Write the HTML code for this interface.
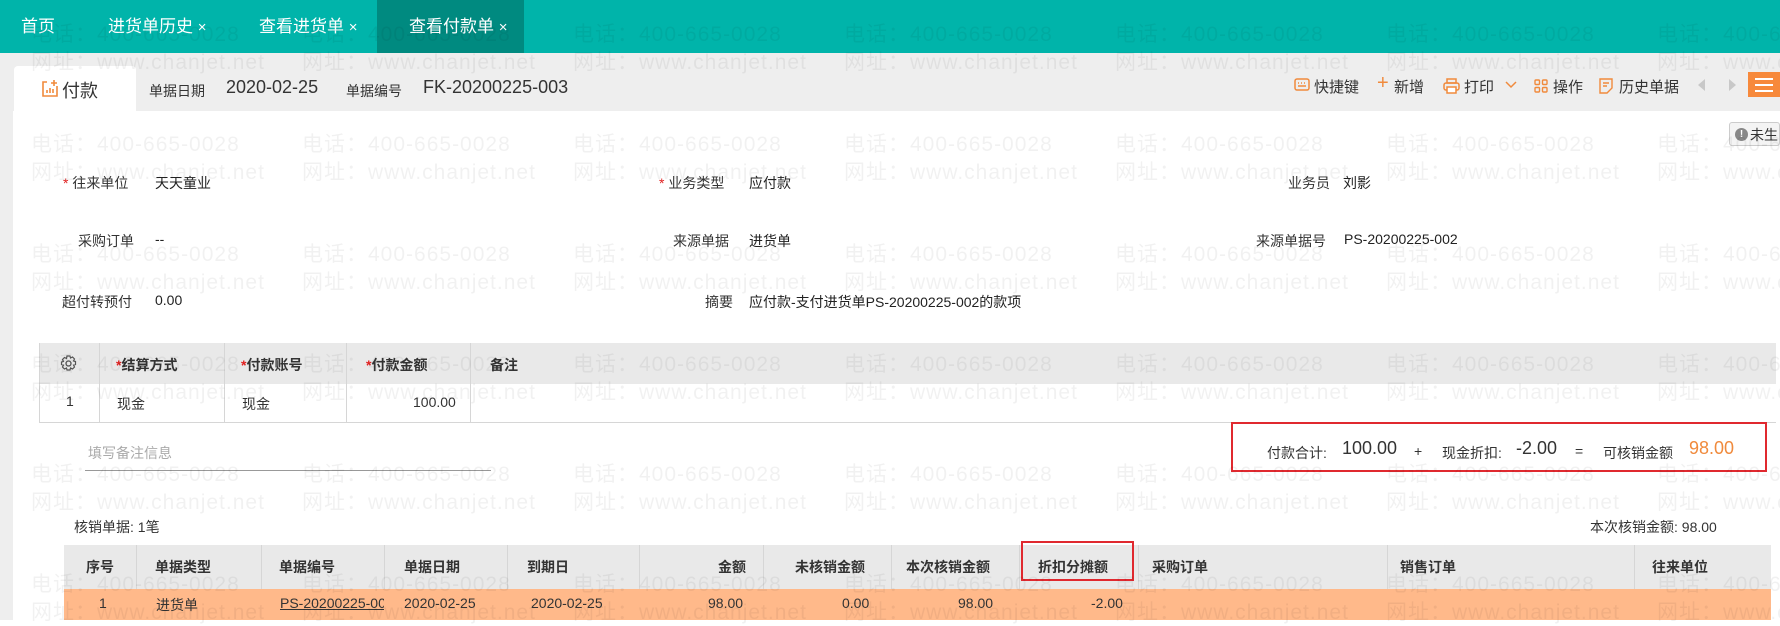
<!DOCTYPE html>
<html><head><meta charset="utf-8">
<style>
*{margin:0;padding:0;box-sizing:border-box}
body{width:1780px;height:620px;overflow:hidden;background:#fff;font-family:"Liberation Sans","Noto Sans CJK SC",sans-serif;color:#333;position:relative}
.a{position:absolute;white-space:nowrap}
.top{position:absolute;left:0;top:0;width:1780px;height:53px;background:#00b4aa}
.tab{position:absolute;top:0;height:53px;line-height:53px;color:#fff;font-size:17px}
.band{position:absolute;left:0;top:53px;width:1780px;height:58px;background:#eeeeee}
.lbl{font-size:14px;color:#333}
.val{font-size:14px;color:#222}
.req{color:#e02020}
.t1h{position:absolute;top:343px;height:41px;background:#e9e9e9}
.vl{position:absolute;width:1px;background:#d6d6d6}
.wm{position:absolute;font-size:21px;color:rgba(0,0,0,0.055);white-space:nowrap;letter-spacing:1px}
.o{color:#f08a3c}
.th{font-size:14px;font-weight:bold;color:#333}
.tb{font-size:14px;color:#333}
</style></head><body>
<div class="top"></div>
<div class="a" style="left:377px;top:0;width:147px;height:53px;background:#008a80"></div>
<div class="tab" style="left:21px">首页</div>
<div class="tab" style="left:108px">进货单历史 <span style="font-size:15px">×</span></div>
<div class="tab" style="left:259px">查看进货单 <span style="font-size:15px">×</span></div>
<div class="tab" style="left:409px">查看付款单 <span style="font-size:15px">×</span></div>

<div class="band"></div>
<div class="a" style="left:0;top:111px;width:13px;height:509px;background:#eeeeee"></div>
<div class="a" style="left:14px;top:66px;width:122px;height:45px;background:#fff;border-radius:4px 4px 0 0"></div>
<svg class="a" style="left:40px;top:79px" width="20" height="20" viewBox="0 0 20 20"><path d="M7 3H3v14h14V7" fill="none" stroke="#f08a3c" stroke-width="1.6"/><path d="M14 1v6M11 4h6" stroke="#f08a3c" stroke-width="1.6"/><path d="M7 14v-3M10 14V9M13 14v-4" stroke="#f08a3c" stroke-width="1.6"/></svg>
<div class="a" style="left:62px;top:77px;font-size:18px;color:#333">付款</div>
<div class="a lbl" style="left:149px;top:81px">单据日期</div>
<div class="a" style="left:226px;top:77px;font-size:18px;color:#333">2020-02-25</div>
<div class="a lbl" style="left:346px;top:81px">单据编号</div>
<div class="a" style="left:423px;top:77px;font-size:18px;color:#333">FK-20200225-003</div>

<!-- toolbar -->
<svg class="a" style="left:1294px;top:78px" width="16" height="15" viewBox="0 0 16 15"><rect x="1" y="1" width="14" height="11" rx="2" fill="none" stroke="#f08a3c" stroke-width="1.5"/><path d="M4 5h1M7 5h1M10 5h1M4 8h8" stroke="#f08a3c" stroke-width="1.5"/></svg>
<div class="a" style="left:1314px;top:76px;font-size:15px">快捷键</div>
<div class="a o" style="left:1377px;top:72px;font-size:20px">+</div>
<div class="a" style="left:1394px;top:76px;font-size:15px">新增</div>
<svg class="a" style="left:1443px;top:78px" width="17" height="16" viewBox="0 0 17 16"><rect x="4" y="1" width="9" height="4" fill="none" stroke="#f08a3c" stroke-width="1.5"/><rect x="1" y="5" width="15" height="7" rx="2" fill="none" stroke="#f08a3c" stroke-width="1.5"/><rect x="4" y="9" width="9" height="6" fill="#fff" stroke="#f08a3c" stroke-width="1.5"/></svg>
<div class="a" style="left:1464px;top:76px;font-size:15px">打印</div>
<svg class="a" style="left:1505px;top:81px" width="12" height="8"><path d="M1 1l5 5 5-5" fill="none" stroke="#f08a3c" stroke-width="1.5"/></svg>
<svg class="a" style="left:1534px;top:79px" width="14" height="14"><rect x="1" y="1" width="4.5" height="4.5" rx="1" fill="none" stroke="#f08a3c" stroke-width="1.4"/><rect x="8.5" y="1" width="4.5" height="4.5" rx="1" fill="none" stroke="#f08a3c" stroke-width="1.4"/><rect x="1" y="8.5" width="4.5" height="4.5" rx="1" fill="none" stroke="#f08a3c" stroke-width="1.4"/><rect x="8.5" y="8.5" width="4.5" height="4.5" rx="1" fill="none" stroke="#f08a3c" stroke-width="1.4"/></svg>
<div class="a" style="left:1553px;top:76px;font-size:15px">操作</div>
<svg class="a" style="left:1599px;top:78px" width="14" height="16"><path d="M1 1h12v9l-5 5H1z" fill="none" stroke="#f08a3c" stroke-width="1.4"/><path d="M4 5h6M4 8h4" stroke="#f08a3c" stroke-width="1.4"/></svg>
<div class="a" style="left:1619px;top:76px;font-size:15px">历史单据</div>
<svg class="a" style="left:1698px;top:79px" width="8" height="12"><path d="M7 0v12L0 6z" fill="#c8c8c8"/></svg>
<svg class="a" style="left:1728px;top:79px" width="8" height="12"><path d="M1 0v12l7-6z" fill="#c8c8c8"/></svg>
<div class="a" style="left:1748px;top:72px;width:32px;height:25px;background:#f7893b"></div>
<div class="a" style="left:1755px;top:78px;width:18px;height:2px;background:#fff"></div>
<div class="a" style="left:1755px;top:84px;width:18px;height:2px;background:#fff"></div>
<div class="a" style="left:1755px;top:90px;width:18px;height:2px;background:#fff"></div>
<div class="a" style="left:1729px;top:122px;width:51px;height:24px;background:#f4f4f4;border:1px solid #ccc;border-radius:3px"></div>
<div class="a" style="left:1735px;top:128px;width:13px;height:13px;border-radius:50%;background:#888;color:#fff;font-size:10px;line-height:13px;text-align:center;font-weight:bold">!</div>
<div class="a" style="left:1750px;top:125px;font-size:14px;color:#333">未生</div>

<!-- form -->
<div class="a lbl" style="left:63px;top:173px"><span class="req">*</span> 往来单位</div>
<div class="a val" style="left:155px;top:173px">天天童业</div>
<div class="a lbl" style="left:659px;top:173px"><span class="req">*</span> 业务类型</div>
<div class="a val" style="left:749px;top:173px">应付款</div>
<div class="a lbl" style="left:1288px;top:173px">业务员</div>
<div class="a val" style="left:1343px;top:173px">刘影</div>
<div class="a lbl" style="left:78px;top:231px">采购订单</div>
<div class="a val" style="left:155px;top:231px">--</div>
<div class="a lbl" style="left:673px;top:231px">来源单据</div>
<div class="a val" style="left:749px;top:231px">进货单</div>
<div class="a lbl" style="left:1256px;top:231px">来源单据号</div>
<div class="a val" style="left:1344px;top:231px">PS-20200225-002</div>
<div class="a lbl" style="left:62px;top:292px">超付转预付</div>
<div class="a val" style="left:155px;top:292px">0.00</div>
<div class="a lbl" style="left:705px;top:292px">摘要</div>
<div class="a val" style="left:749px;top:292px">应付款-支付进货单PS-20200225-002的款项</div>

<!-- table1 -->
<div class="t1h" style="left:39px;width:1737px"></div>
<div class="a" style="left:39px;top:384px;width:1737px;height:39px;border-bottom:1px solid #d6d6d6"></div>
<div class="vl" style="left:39px;top:343px;height:80px"></div>
<div class="vl" style="left:99px;top:343px;height:80px"></div>
<div class="vl" style="left:224px;top:343px;height:80px"></div>
<div class="vl" style="left:346px;top:343px;height:80px"></div>
<div class="vl" style="left:470px;top:343px;height:80px"></div>
<svg class="a" style="left:60px;top:355px" width="17" height="17" viewBox="0 0 17 17"><circle cx="8.5" cy="8.5" r="2.5" fill="none" stroke="#555" stroke-width="1.3"/><path d="M7 1h3l.5 2 2-1 2 2-1 2 2 .5v3l-2 .5 1 2-2 2-2-1-.5 2H7l-.5-2-2 1-2-2 1-2-2-.5V7l2-.5-1-2 2-2 2 1z" fill="none" stroke="#555" stroke-width="1.2"/></svg>
<div class="a th" style="left:116px;top:355px"><span class="req">*</span>结算方式</div>
<div class="a th" style="left:241px;top:355px"><span class="req">*</span>付款账号</div>
<div class="a th" style="left:366px;top:355px"><span class="req">*</span>付款金额</div>
<div class="a th" style="left:490px;top:355px">备注</div>
<div class="a tb" style="left:66px;top:393px">1</div>
<div class="a tb" style="left:117px;top:394px">现金</div>
<div class="a tb" style="left:242px;top:394px">现金</div>
<div class="a tb" style="left:413px;top:394px">100.00</div>

<div class="a" style="left:88px;top:443px;font-size:14px;color:#aaa">填写备注信息</div>
<div class="a" style="left:85px;top:470px;width:406px;height:1px;background:#999"></div>

<div class="a" style="left:1231px;top:422px;width:536px;height:50px;border:2px solid #e0292f"></div>
<div class="a" style="left:1267px;top:443px;font-size:14px">付款合计:</div>
<div class="a" style="left:1342px;top:438px;font-size:18px">100.00</div>
<div class="a" style="left:1414px;top:443px;font-size:14px">+</div>
<div class="a" style="left:1442px;top:443px;font-size:14px">现金折扣:</div>
<div class="a" style="left:1516px;top:438px;font-size:18px">-2.00</div>
<div class="a" style="left:1575px;top:443px;font-size:14px">=</div>
<div class="a" style="left:1603px;top:443px;font-size:14px">可核销金额</div>
<div class="a o" style="left:1689px;top:438px;font-size:18px">98.00</div>

<div class="a" style="left:74px;top:517px;font-size:14px">核销单据: 1笔</div>
<div class="a" style="left:1590px;top:517px;font-size:14px">本次核销金额: 98.00</div>

<!-- table2 -->
<div class="a" style="left:64px;top:545px;width:1707px;height:44px;background:#e9e9e9"></div>
<div class="a" style="left:64px;top:589px;width:1707px;height:31px;background:#ffb98a"></div>
<div class="vl" style="left:136px;top:545px;height:44px"></div>
<div class="vl" style="left:261px;top:545px;height:44px"></div>
<div class="vl" style="left:384px;top:545px;height:44px"></div>
<div class="vl" style="left:507px;top:545px;height:44px"></div>
<div class="vl" style="left:639px;top:545px;height:44px"></div>
<div class="vl" style="left:763px;top:545px;height:44px"></div>
<div class="vl" style="left:891px;top:545px;height:44px"></div>
<div class="vl" style="left:1019px;top:545px;height:44px"></div>
<div class="vl" style="left:1138px;top:545px;height:44px"></div>
<div class="vl" style="left:1387px;top:545px;height:44px"></div>
<div class="vl" style="left:1634px;top:545px;height:44px"></div>
<div class="a th" style="left:86px;top:557px">序号</div>
<div class="a th" style="left:155px;top:557px">单据类型</div>
<div class="a th" style="left:279px;top:557px">单据编号</div>
<div class="a th" style="left:404px;top:557px">单据日期</div>
<div class="a th" style="left:527px;top:557px">到期日</div>
<div class="a th" style="left:718px;top:557px">金额</div>
<div class="a th" style="left:795px;top:557px">未核销金额</div>
<div class="a th" style="left:906px;top:557px">本次核销金额</div>
<div class="a th" style="left:1038px;top:557px">折扣分摊额</div>
<div class="a th" style="left:1152px;top:557px">采购订单</div>
<div class="a th" style="left:1400px;top:557px">销售订单</div>
<div class="a th" style="left:1652px;top:557px">往来单位</div>
<div class="a" style="left:1021px;top:541px;width:113px;height:40px;border:2px solid #e0292f"></div>
<div class="a tb" style="left:99px;top:595px">1</div>
<div class="a tb" style="left:156px;top:595px">进货单</div>
<div class="a tb" style="left:280px;top:595px;width:104px;overflow:hidden;text-decoration:underline">PS-20200225-002</div>
<div class="a tb" style="left:404px;top:595px">2020-02-25</div>
<div class="a tb" style="left:531px;top:595px">2020-02-25</div>
<div class="a tb" style="left:708px;top:595px">98.00</div>
<div class="a tb" style="left:842px;top:595px">0.00</div>
<div class="a tb" style="left:958px;top:595px">98.00</div>
<div class="a tb" style="left:1091px;top:595px">-2.00</div>

<!-- watermark -->
<div class="a" style="left:0;top:0;width:1780px;height:620px;pointer-events:none">
<div class="wm" style="left:31px;top:18px">电话：400-665-0028</div><div class="wm" style="left:302px;top:18px">电话：400-665-0028</div><div class="wm" style="left:573px;top:18px">电话：400-665-0028</div><div class="wm" style="left:844px;top:18px">电话：400-665-0028</div><div class="wm" style="left:1115px;top:18px">电话：400-665-0028</div><div class="wm" style="left:1386px;top:18px">电话：400-665-0028</div><div class="wm" style="left:1657px;top:18px">电话：400-665-0028</div>
<div class="wm" style="left:31px;top:46px">网址：www.chanjet.net</div><div class="wm" style="left:302px;top:46px">网址：www.chanjet.net</div><div class="wm" style="left:573px;top:46px">网址：www.chanjet.net</div><div class="wm" style="left:844px;top:46px">网址：www.chanjet.net</div><div class="wm" style="left:1115px;top:46px">网址：www.chanjet.net</div><div class="wm" style="left:1386px;top:46px">网址：www.chanjet.net</div><div class="wm" style="left:1657px;top:46px">网址：www.chanjet.net</div>
<div class="wm" style="left:31px;top:128px">电话：400-665-0028</div><div class="wm" style="left:302px;top:128px">电话：400-665-0028</div><div class="wm" style="left:573px;top:128px">电话：400-665-0028</div><div class="wm" style="left:844px;top:128px">电话：400-665-0028</div><div class="wm" style="left:1115px;top:128px">电话：400-665-0028</div><div class="wm" style="left:1386px;top:128px">电话：400-665-0028</div><div class="wm" style="left:1657px;top:128px">电话：400-665-0028</div>
<div class="wm" style="left:31px;top:156px">网址：www.chanjet.net</div><div class="wm" style="left:302px;top:156px">网址：www.chanjet.net</div><div class="wm" style="left:573px;top:156px">网址：www.chanjet.net</div><div class="wm" style="left:844px;top:156px">网址：www.chanjet.net</div><div class="wm" style="left:1115px;top:156px">网址：www.chanjet.net</div><div class="wm" style="left:1386px;top:156px">网址：www.chanjet.net</div><div class="wm" style="left:1657px;top:156px">网址：www.chanjet.net</div>
<div class="wm" style="left:31px;top:238px">电话：400-665-0028</div><div class="wm" style="left:302px;top:238px">电话：400-665-0028</div><div class="wm" style="left:573px;top:238px">电话：400-665-0028</div><div class="wm" style="left:844px;top:238px">电话：400-665-0028</div><div class="wm" style="left:1115px;top:238px">电话：400-665-0028</div><div class="wm" style="left:1386px;top:238px">电话：400-665-0028</div><div class="wm" style="left:1657px;top:238px">电话：400-665-0028</div>
<div class="wm" style="left:31px;top:266px">网址：www.chanjet.net</div><div class="wm" style="left:302px;top:266px">网址：www.chanjet.net</div><div class="wm" style="left:573px;top:266px">网址：www.chanjet.net</div><div class="wm" style="left:844px;top:266px">网址：www.chanjet.net</div><div class="wm" style="left:1115px;top:266px">网址：www.chanjet.net</div><div class="wm" style="left:1386px;top:266px">网址：www.chanjet.net</div><div class="wm" style="left:1657px;top:266px">网址：www.chanjet.net</div>
<div class="wm" style="left:31px;top:348px">电话：400-665-0028</div><div class="wm" style="left:302px;top:348px">电话：400-665-0028</div><div class="wm" style="left:573px;top:348px">电话：400-665-0028</div><div class="wm" style="left:844px;top:348px">电话：400-665-0028</div><div class="wm" style="left:1115px;top:348px">电话：400-665-0028</div><div class="wm" style="left:1386px;top:348px">电话：400-665-0028</div><div class="wm" style="left:1657px;top:348px">电话：400-665-0028</div>
<div class="wm" style="left:31px;top:376px">网址：www.chanjet.net</div><div class="wm" style="left:302px;top:376px">网址：www.chanjet.net</div><div class="wm" style="left:573px;top:376px">网址：www.chanjet.net</div><div class="wm" style="left:844px;top:376px">网址：www.chanjet.net</div><div class="wm" style="left:1115px;top:376px">网址：www.chanjet.net</div><div class="wm" style="left:1386px;top:376px">网址：www.chanjet.net</div><div class="wm" style="left:1657px;top:376px">网址：www.chanjet.net</div>
<div class="wm" style="left:31px;top:458px">电话：400-665-0028</div><div class="wm" style="left:302px;top:458px">电话：400-665-0028</div><div class="wm" style="left:573px;top:458px">电话：400-665-0028</div><div class="wm" style="left:844px;top:458px">电话：400-665-0028</div><div class="wm" style="left:1115px;top:458px">电话：400-665-0028</div><div class="wm" style="left:1386px;top:458px">电话：400-665-0028</div><div class="wm" style="left:1657px;top:458px">电话：400-665-0028</div>
<div class="wm" style="left:31px;top:486px">网址：www.chanjet.net</div><div class="wm" style="left:302px;top:486px">网址：www.chanjet.net</div><div class="wm" style="left:573px;top:486px">网址：www.chanjet.net</div><div class="wm" style="left:844px;top:486px">网址：www.chanjet.net</div><div class="wm" style="left:1115px;top:486px">网址：www.chanjet.net</div><div class="wm" style="left:1386px;top:486px">网址：www.chanjet.net</div><div class="wm" style="left:1657px;top:486px">网址：www.chanjet.net</div>
<div class="wm" style="left:31px;top:568px">电话：400-665-0028</div><div class="wm" style="left:302px;top:568px">电话：400-665-0028</div><div class="wm" style="left:573px;top:568px">电话：400-665-0028</div><div class="wm" style="left:844px;top:568px">电话：400-665-0028</div><div class="wm" style="left:1115px;top:568px">电话：400-665-0028</div><div class="wm" style="left:1386px;top:568px">电话：400-665-0028</div><div class="wm" style="left:1657px;top:568px">电话：400-665-0028</div>
<div class="wm" style="left:31px;top:596px">网址：www.chanjet.net</div><div class="wm" style="left:302px;top:596px">网址：www.chanjet.net</div><div class="wm" style="left:573px;top:596px">网址：www.chanjet.net</div><div class="wm" style="left:844px;top:596px">网址：www.chanjet.net</div><div class="wm" style="left:1115px;top:596px">网址：www.chanjet.net</div><div class="wm" style="left:1386px;top:596px">网址：www.chanjet.net</div><div class="wm" style="left:1657px;top:596px">网址：www.chanjet.net</div>
</div>
</body></html>
